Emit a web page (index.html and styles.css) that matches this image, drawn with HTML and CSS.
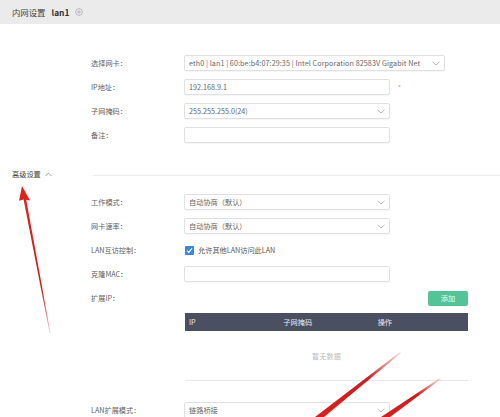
FILE: index.html
```html
<!DOCTYPE html>
<html lang="zh">
<head>
<meta charset="utf-8">
<link rel="stylesheet" href="styles.css">
</head>
<body>
<div class="page">
  <div class="topbar">
    <span class="crumb">内网设置</span>
    <span class="name">lan1</span>
    <svg class="plus" width="8" height="8" viewBox="0 0 8 8"><circle cx="4" cy="4" r="3.4" fill="none" stroke="#aaa" stroke-width="0.7"/><path d="M4 1.8V6.2M1.8 4H6.2" stroke="#aaa" stroke-width="0.7"/></svg>
  </div>

  <div class="form basic">
    <div class="row">
      <div class="label">选择网卡：</div>
      <div class="field select wide"><span class="val long">eth0 | lan1 | 60:be:b4:07:29:35 | Intel Corporation 82583V Gigabit Net</span><svg class="chev" width="8" height="5" viewBox="0 0 8 5"><path d="M0.5 0.8L4 4L7.5 0.8" fill="none" stroke="#aaa" stroke-width="0.8"/></svg></div>
    </div>
    <div class="row">
      <div class="label">IP地址：</div>
      <div class="field"><span class="val">192.168.9.1</span></div>
      <span class="req">*</span>
    </div>
    <div class="row">
      <div class="label">子网掩码：</div>
      <div class="field select"><span class="val">255.255.255.0(24)</span><svg class="chev" width="8" height="5" viewBox="0 0 8 5"><path d="M0.5 0.8L4 4L7.5 0.8" fill="none" stroke="#aaa" stroke-width="0.8"/></svg></div>
    </div>
    <div class="row">
      <div class="label">备注：</div>
      <div class="field"></div>
    </div>
  </div>

  <div class="adv-head">
    <span class="adv-title">高级设置</span>
    <svg class="up" width="7" height="5" viewBox="0 0 7 5"><path d="M0.6 4L3.5 1L6.4 4" fill="none" stroke="#888" stroke-width="0.8"/></svg>
    <span class="adv-line"></span>
  </div>

  <div class="form adv">
    <div class="row">
      <div class="label">工作模式：</div>
      <div class="field select"><span class="val">自动协商（默认）</span><svg class="chev" width="8" height="5" viewBox="0 0 8 5"><path d="M0.5 0.8L4 4L7.5 0.8" fill="none" stroke="#aaa" stroke-width="0.8"/></svg></div>
    </div>
    <div class="row">
      <div class="label">网卡速率：</div>
      <div class="field select"><span class="val">自动协商（默认）</span><svg class="chev" width="8" height="5" viewBox="0 0 8 5"><path d="M0.5 0.8L4 4L7.5 0.8" fill="none" stroke="#aaa" stroke-width="0.8"/></svg></div>
    </div>
    <div class="row">
      <div class="label">LAN互访控制：</div>
      <div class="check">
        <svg class="box" width="9" height="9" viewBox="0 0 9 9"><rect width="9" height="9" rx="1" fill="#3d85d8"/><path d="M2 4.6L3.8 6.4L7 2.4" fill="none" stroke="#fff" stroke-width="1.2"/></svg>
        <span>允许其他LAN访问此LAN</span>
      </div>
    </div>
    <div class="row">
      <div class="label">克隆MAC：</div>
      <div class="field"></div>
    </div>
    <div class="row">
      <div class="label">扩展IP：</div>
      <div class="ext">
        <span class="btn">添加</span>
      </div>
    </div>
    <div class="tablewrap">
      <div class="thead">
        <div class="th">IP</div>
        <div class="th">子网掩码</div>
        <div class="th">操作</div>
      </div>
      <div class="empty">暂无数据</div>
    </div>
    <div class="row last">
      <div class="label">LAN扩展模式：</div>
      <div class="field select"><span class="val">链路桥接</span><svg class="chev" width="8" height="5" viewBox="0 0 8 5"><path d="M0.5 0.8L4 4L7.5 0.8" fill="none" stroke="#aaa" stroke-width="0.8"/></svg></div>
    </div>
  </div>

  <svg class="arrows" width="500" height="417" viewBox="0 0 500 417">
    <defs>
      <linearGradient id="g1" x1="22" y1="186" x2="50" y2="333" gradientUnits="userSpaceOnUse">
        <stop offset="0" stop-color="#e0231c"/>
        <stop offset="0.7" stop-color="#c8201a"/>
        <stop offset="1" stop-color="#c8201a" stop-opacity="0.2"/>
      </linearGradient>
      <linearGradient id="g2" x1="400" y1="352" x2="318" y2="417" gradientUnits="userSpaceOnUse">
        <stop offset="0" stop-color="#c22" stop-opacity="0.15"/>
        <stop offset="0.4" stop-color="#c81e1e"/>
        <stop offset="1" stop-color="#d92020"/>
      </linearGradient>
      <linearGradient id="g3" x1="440" y1="378" x2="382" y2="417" gradientUnits="userSpaceOnUse">
        <stop offset="0" stop-color="#c22" stop-opacity="0.15"/>
        <stop offset="0.4" stop-color="#c81e1e"/>
        <stop offset="1" stop-color="#d92020"/>
      </linearGradient>
    </defs>
    <polygon points="22,186 30,200.5 26.2,199.8 50.5,333 49.6,333 23.6,199.4 19,200.8" fill="url(#g1)"/>
    <polygon points="400,352 401,353 324,417 315,417" fill="url(#g2)"/>
    <polygon points="440,378 441,379 390,417 381,417" fill="url(#g3)"/>
  </svg>
</div>
</body>
</html>
```

FILE: styles.css
```css
* { box-sizing: border-box; }
html, body { margin: 0; padding: 0; background: #fff; }
body {
  font-family: "Noto Sans CJK SC", "Noto Sans", sans-serif;
  font-size: 7.2px;
  color: #5a5a5a;
}
.page {
  position: relative;
  width: 500px;
  height: 417px;
  overflow: hidden;
}
.topbar {
  height: 24px;
  background: #ebebeb;
  display: flex;
  align-items: center;
  padding-left: 12px;
  font-size: 8.4px;
  color: #444;
}
.name {
  font-weight: bold;
  margin-left: 6px;
  color: #333;
}
.plus { margin-left: 6px; }

.form { padding-left: 91px; }
.basic { padding-top: 27px; }
.row {
  height: 24px;
  display: flex;
  align-items: center;
}
.label {
  width: 93px;
  color: #5f5f5f;
  white-space: nowrap;
}
.field {
  width: 206px;
  height: 16px;
  border: 1px solid #e0e0e0;
  border-radius: 2px;
  box-shadow: 0 1px 1px rgba(0,0,0,0.04);
  display: flex;
  align-items: center;
  padding: 0 4px;
  color: #666;
  overflow: hidden;
}
.field.wide { width: 261px; }
.val {
  flex: 1;
  white-space: nowrap;
}
.val.long { letter-spacing: 0.08px; }
.chev { flex: none; margin-left: 3px; }
.req {
  margin-left: 8px;
  color: #999;
  font-size: 6px;
}

.adv-head {
  margin-top: 15px;
  height: 24px;
  display: flex;
  align-items: center;
  padding-left: 12px;
  color: #444;
}
.up { margin-left: 4px; }
.adv-line {
  flex: 1;
  height: 1px;
  background: #eee;
  margin-left: 41px;
  margin-top: 2px;
}
.adv { padding-top: 4px; }

.check {
  display: flex;
  align-items: center;
  padding-left: 1px;
  color: #555;
}
.box { margin-right: 4px; }

.ext {
  width: 284px;
  display: flex;
  justify-content: flex-end;
}
.btn {
  width: 40px;
  height: 15px;
  background: #52c497;
  color: #e8fff5;
  border-radius: 2px;
  display: flex;
  align-items: center;
  justify-content: center;
}

.tablewrap {
  margin-left: 94px;
  width: 283px;
  margin-top: 3px;
  border-bottom: 1px solid #e8e8e8;
}
.thead {
  height: 18px;
  background: #4a5062;
  display: grid;
  grid-template-columns: 1fr 1fr 1fr;
  align-items: center;
  color: #e8e8ee;
}
.th { padding-left: 4px; }
.empty {
  height: 49px;
  display: flex;
  align-items: center;
  justify-content: center;
  color: #bbb;
}
.row.last { margin-top: 17px; }

.arrows {
  position: absolute;
  left: 0;
  top: 0;
  pointer-events: none;
}
```
